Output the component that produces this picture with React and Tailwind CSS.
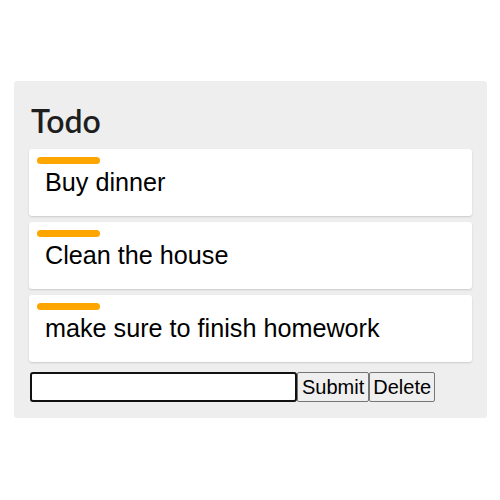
import { useState } from "react";

const todos = ["Buy dinner", "Clean the house", "make sure to finish homework"];

function TodoCard({ text }) {
  return (
    <div className="h-[67px] bg-white rounded-[3px] shadow-[0_1px_2px_rgba(0,0,0,0.15)]">
      <div className="ml-2 pt-2">
        <div className="h-[7px] w-[63px] rounded-full bg-[#ffa500]" />
      </div>
      <div className="pl-[16px] pt-[4px] text-[25.2px] leading-[28px] text-black font-['Liberation_Sans',Arial,sans-serif]">
        {text}
      </div>
    </div>
  );
}

export default function App() {
  const [value, setValue] = useState("");

  return (
    <div className="min-h-screen bg-white pt-[81px] pl-[14px]">
      <div className="w-[473px] bg-[#eeeeee] rounded-[3px] px-[15px] pt-[20px] pb-[16px]">
        <div className="ml-[2px] text-[32px] leading-[40px] font-semibold text-[#1e1e1e] font-['Lato',sans-serif] mb-[8px]">
          Todo
        </div>
        <div className="flex flex-col gap-[6px]">
          {todos.map((t) => (
            <TodoCard key={t} text={t} />
          ))}
        </div>
        <div className="flex items-stretch mt-[10px] font-['Liberation_Sans',Arial,sans-serif]">
          <input
            autoFocus
            value={value}
            onChange={(e) => setValue(e.target.value)}
            className="w-[267px] h-[30px] ml-px bg-white border-2 border-[#111] rounded-[3px] outline-none px-[2px] text-[20px]"
          />
          <button className="h-[30px] px-[4px] bg-[#efefef] border border-[#767676] rounded-[2px] text-[20px] leading-none text-black">
            Submit
          </button>
          <button className="h-[30px] px-[3px] bg-[#efefef] border border-[#767676] rounded-[2px] text-[20px] leading-none text-black">
            Delete
          </button>
        </div>
      </div>
    </div>
  );
}
